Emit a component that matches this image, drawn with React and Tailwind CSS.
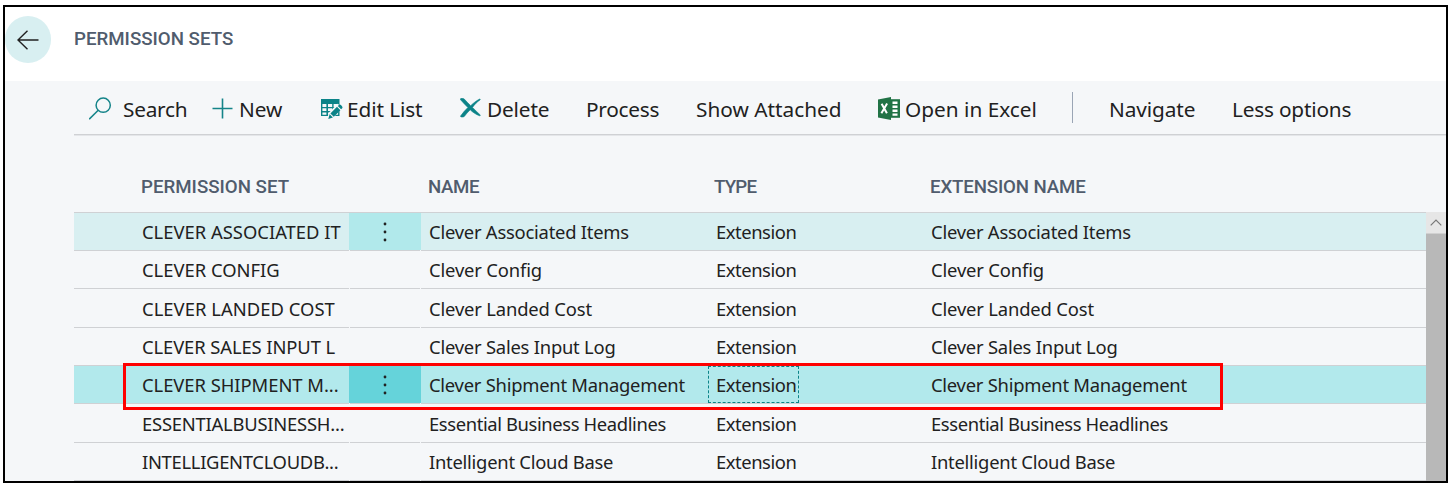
import React from "react";

const rows = [
  { h: "h-[38px]", set: "CLEVER ASSOCIATED IT", st: "", name: "Clever Associated Items", nt: "tracking-[-0.23px]", tone: "hover" },
  { h: "h-[38px]", set: "CLEVER CONFIG", st: "", name: "Clever Config", nt: "tracking-[-0.16px]" },
  { h: "h-[39px]", set: "CLEVER LANDED COST", st: "tracking-[0.04px]", name: "Clever Landed Cost", nt: "tracking-[-0.16px]" },
  { h: "h-[38px]", set: "CLEVER SALES INPUT L", st: "tracking-[-0.1px]", name: "Clever Sales Input Log", nt: "tracking-[-0.22px]" },
  { h: "h-[38px]", set: "CLEVER SHIPMENT M...", st: "tracking-[-0.04px]", name: "Clever Shipment Management", nt: "tracking-[-0.25px]", tone: "selected" },
  { h: "h-[39px]", set: "ESSENTIALBUSINESSH...", st: "tracking-[-0.22px]", name: "Essential Business Headlines", nt: "tracking-[-0.38px]" },
  { h: "h-[38px]", set: "INTELLIGENTCLOUDB...", st: "tracking-[-0.3px]", name: "Intelligent Cloud Base", nt: "tracking-[-0.25px]" },
];

const rowTone = { hover: "bg-[#d8eff1]", selected: "bg-[#b2e9ec]" };
const menuTone = { hover: "bg-[#b1e9eb]", selected: "bg-[#65d3da]" };

function BackArrow() {
  return (
    <svg width="22" height="20" viewBox="0 0 22 20" fill="none" stroke="#212121" strokeWidth="1.4">
      <path d="M21.5 10H1M10.5 .7L1 10l9.5 9.3" />
    </svg>
  );
}

function SearchIcon() {
  return (
    <svg className="-mt-[3px]" width="23" height="23" viewBox="0 0 23 23" fill="none" stroke="#148489" strokeWidth="1.5">
      <circle cx="14.2" cy="8.2" r="7.1" />
      <path d="M9.2 13.2L.2 22.2" />
    </svg>
  );
}

function PlusIcon() {
  return (
    <svg className="-mt-[3px]" width="21" height="21" viewBox="0 0 21 21" stroke="#148489" strokeWidth="1.6">
      <path d="M10.5 .5v20M.5 10.5h20" />
    </svg>
  );
}

function EditListIcon() {
  return (
    <svg className="-mt-[2px]" width="22" height="20" viewBox="0 0 22 20">
      <path d="M0 0h18.500v17H0z" fill="#0b8388" />
      <path d="M1.4 5h4v3h-4zM7 5h4.2v3H7zM12.6 5h4v3h-4zM1.4 9.3h4v2.8h-4zM7 9.3h4.2v2.8H7zM12.6 9.3h4v2.8h-4zM1.4 13.4h4v2.3h-4zM7 13.4h4.2v2.3H7zM12.6 13.4h4.500v2.300h-4.500z" fill="#f5f7f9" />
      <path d="M6 20l1.8-6.200L16.500 4.800l5.500 3.200L12 19z" fill="#f5f7f9" />
      <path d="M7.300 19.900l1.300-4.700 3.300 3.300zM9.4 14.4l6.600-6.600 3.400 3.400-6.600 6.600zM16.800 7l1.400-1.300c.9-.8 3.900 2 3.200 3.200l-1.300 1.300z" fill="#0b8388" />
    </svg>
  );
}

function DeleteIcon() {
  return (
    <svg className="-mt-[4px]" width="21" height="20" viewBox="0 0 21 20" fill="#0b8388" stroke="#0b8388" strokeWidth=".6">
      <path d="M.8.5C2 .1 3.300.2 4.500 1.300c2 2.200 3.900 4.200 6.200 6.400C13.400 5 16.500 2.600 19.800 1c.5.100.7.500.2.900-2.800 1.900-5.200 4.300-7.500 7.500 2.500 2.700 5 5 7.700 7.500.3.500-.1.900-.7.800-3.300-1.100-6.500-3.200-9.300-5.900-2.200 2.100-4.200 4.300-5.900 6.600-1.200.9-3.600.9-3.900-.2C2.700 15 5.200 12.100 7.900 9.500 5.200 6.800 2.600 4.100.5 1.700.2 1.100.3.700.8.500z" />
    </svg>
  );
}

function ExcelIcon() {
  return (
    <svg className="-mt-[4px]" width="22" height="23" viewBox="0 0 22 23">
      <path d="M11 2.200h11v18.600H11z" fill="#217346" />
      <path d="M14.500 4.600h5v2.500h-5zM14.500 8.600h5v2.500h-5zM14.500 12.600h5v2.500h-5zM14.500 16.400h5v2.400h-5z" fill="#fff" />
      <path d="M0 2.500L13 0v23L0 20.500z" fill="#217346" />
      <path d="M3.600 6.800l5.300 9.500M9.100 6.500L3.400 16.200" stroke="#fff" strokeWidth="2" />
    </svg>
  );
}

const heading = "font-[Roboto,sans-serif] font-medium text-[18.700px] text-[#505c6d] whitespace-nowrap";

function Dots() {
  return (
    <svg width="4" height="20" viewBox="0 0 4 20" fill="#212121">
      <circle cx="2" cy="2" r="1.400" />
      <circle cx="2" cy="10" r="1.400" />
      <circle cx="2" cy="18" r="1.400" />
    </svg>
  );
}

function Row({ row }) {
  const selected = row.tone === "selected";
  return (
    <div className={`relative grid grid-cols-[275px_72px_287px_216px_1fr] border-b border-[#cfd1d4] text-[18.400px] whitespace-nowrap ${row.h} ${rowTone[row.tone] ?? ""}`}>
      <div className={`flex items-center pl-[68px] pt-px ${row.st}`}>{row.set}</div>
      <div className={`flex items-center justify-center ${menuTone[row.tone] ?? ""}`}>{row.tone && <Dots />}</div>
      <div className={`flex items-center pl-[8px] pt-px ${row.nt}`}>{row.name}</div>
      <div className="flex">
        <div className={`flex w-[91px] items-center pl-[7px] pt-px tracking-[-0.450px] border border-dashed ${selected ? "border-[#0b8388]" : "border-transparent"}`}>Extension</div>
      </div>
      <div className={`flex items-center pl-[7px] pt-px ${row.nt}`}>{row.name}</div>
      <span className="absolute -bottom-px left-[275px] h-px w-px bg-[#f5f7f9]" />
      <span className="absolute -bottom-px left-[346px] h-px w-px bg-[#f5f7f9]" />
    </div>
  );
}

export default function App() {
  return (
    <div className="h-[490px] w-[1453px] overflow-hidden bg-white pl-[3px] pt-[5px] font-['Noto_Sans',sans-serif] text-[#212121]">
      <div className="relative flex h-[478px] w-[1445px] flex-col border-2 border-black">
        <header className="flex h-[74px] shrink-0 items-start">
          <div className="mt-[9px] flex h-[47px] w-[46px] items-center justify-center rounded-full bg-[#d8eff1] pr-px">
            <BackArrow />
          </div>
          <h1 className={`ml-[23px] mt-[18px] leading-[28px] ${heading}`}>PERMISSION SETS</h1>
        </header>
        <main className="flex min-h-0 flex-1 flex-col bg-[#f5f7f9] pl-[69px]">
          <nav className="flex h-[54px] shrink-0 items-center border-b border-[#cfd1d4] pl-[15px] pt-[5px] text-[20.800px] whitespace-nowrap shadow-[0_1px_0_#e4e6e9]">
            <div className="flex w-[123px] items-center gap-[11px] tracking-[-0.250px]"><SearchIcon />Search</div>
            <div className="flex w-[109px] items-center gap-[6px]"><PlusIcon />New</div>
            <div className="flex w-[139px] items-center gap-[4px] tracking-[-0.100px]"><EditListIcon />Edit List</div>
            <div className="flex w-[126px] items-center gap-[6px] tracking-[-0.150px]"><DeleteIcon />Delete</div>
            <div className="w-[110px] tracking-[-0.250px]">Process</div>
            <div className="w-[182px]">Show Attached</div>
            <div className="flex w-[194px] items-center gap-[5px]"><ExcelIcon />Open in Excel</div>
            <div className="mb-[6px] h-[31px] w-px bg-[#9aa5b5]" />
            <div className="ml-[36px] w-[123px] tracking-[-0.100px]">Navigate</div>
            <div className="tracking-[-0.200px]">Less options</div>
          </nav>
          <div className={`mr-[20px] grid h-[78px] shrink-0 grid-cols-[354px_286px_216px_1fr] items-center border-b border-[#cfd1d4] pt-[27px] ${heading}`}>
            <span className="pl-[67px]">PERMISSION SET</span>
            <span className="tracking-[-0.400px]">NAME</span>
            <span className="tracking-[-0.800px]">TYPE</span>
            <span className="tracking-[-0.150px]">EXTENSION NAME</span>
          </div>
          <div className="-mt-px flex min-h-0 flex-1">
            <div className="min-w-0 flex-1 pt-px">
              {rows.map((row) => <Row key={row.set} row={row} />)}
            </div>
            <div className="flex w-[20px] flex-col bg-[#b8b8b8]">
              <div className="flex h-[22px] shrink-0 items-center justify-center border-b border-[#d0d0d0] bg-[#e6e6e6]">
                <svg width="12" height="7" viewBox="0 0 12 7" fill="none" stroke="#777" strokeWidth="1.200"><path d="M.7 6.300L6 1l5.300 5.300" /></svg>
              </div>
            </div>
          </div>
        </main>
        <div className="absolute left-[118px] top-[356px] h-[47px] w-[1100px] border-3 border-[#fe0000]" />
      </div>
    </div>
  );
}
